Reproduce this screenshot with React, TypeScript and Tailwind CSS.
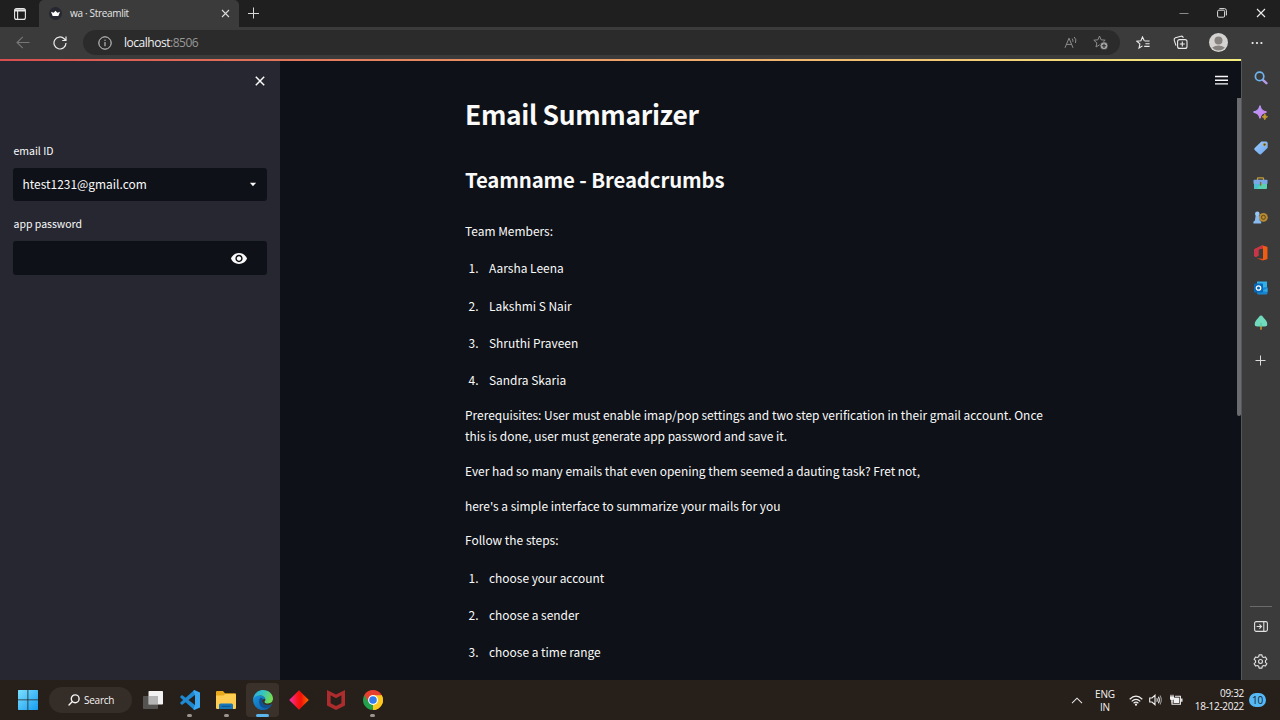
import React from "react";

const TeamMembers = ["Aarsha Leena", "Lakshmi S Nair", "Shruthi Praveen", "Sandra Skaria"];
const Steps = ["choose your account", "choose a sender", "choose a time range"];

function NumberedList({ items }: { items: string[] }) {
  return (
    <ol className="flex flex-col gap-4">
      {items.map((item, i) => (
        <li key={item} className="flex">
          <span className="w-[13.5px] text-right">{i + 1}.</span>
          <span className="ml-[10.5px]">{item}</span>
        </li>
      ))}
    </ol>
  );
}

function TabBar() {
  return (
    <div className="flex h-[27px] items-stretch bg-[#1f1f1f] text-[#e6e6e6]">
      <div className="flex w-[39px] items-center justify-center">
        <svg width="12" height="12" viewBox="0 0 12 12" fill="none" stroke="#e8e8e8" strokeWidth="1.1">
          <rect x="0.6" y="0.6" width="10.8" height="10.8" rx="2" />
          <path d="M1 2.4H11" strokeWidth="2.2" />
          <path d="M3.6 3V11.4" />
        </svg>
      </div>
      <div className="flex w-[200px] items-center rounded-t-[5px] bg-[#3b3b3b] pl-[10px]">
        <svg width="13" height="13" viewBox="0 0 13 13">
          <circle cx="6.5" cy="6.5" r="6.5" fill="#262730" />
          <path d="M2 4.8L4.6 5.8L6.5 3.8L8.4 5.8L11 4.8L9.3 9H3.7Z" fill="#fff" />
        </svg>
        <span className="ml-2 w-[151px] pb-px text-[10px] leading-[14px] tracking-[-0.32px]">wa · Streamlit</span>
        <svg width="9" height="9" viewBox="0 0 9 9" stroke="#dcdcdc" strokeWidth="1.1">
          <path d="M1 1L8 8M8 1L1 8" />
        </svg>
      </div>
      <div className="flex w-[27px] items-center justify-center pb-px">
        <svg width="12" height="12" viewBox="0 0 12 12" stroke="#d8d8d8" strokeWidth="1">
          <path d="M6.5 0.5V11.5M1 6.5H12" />
        </svg>
      </div>
      <div className="ml-auto flex items-center pb-px">
        <div className="flex w-[38px] justify-center">
          <svg width="10" height="10" viewBox="0 0 10 10" stroke="#8a8a8a"><path d="M0.5 5.5H9.5" /></svg>
        </div>
        <div className="flex w-[38px] justify-center">
          <svg width="10" height="10" viewBox="0 0 10 10" fill="none" stroke="#e0e0e0" strokeWidth="1">
            <rect x="0.6" y="2.2" width="7" height="7" rx="1.2" />
            <path d="M2.4 0.6H7.4Q9.4 0.6 9.4 2.6V7.4" />
          </svg>
        </div>
        <div className="flex w-[39px] justify-center">
          <svg width="10" height="10" viewBox="0 0 10 10" stroke="#ececec" strokeWidth="1.1"><path d="M1 1L9 9M9 1L1 9" /></svg>
        </div>
      </div>
    </div>
  );
}

const STAR = "M6.5 1L8.1 4.8L12.2 5.2L9.1 7.9L10 12L6.5 9.9L3 12L3.9 7.9L0.8 5.2L4.9 4.8Z";

function Toolbar() {
  return (
    <div className="flex h-[32px] items-center bg-[#3b3b3b] pb-px">
      <div className="flex w-[83px] items-center pl-4">
        <svg width="14" height="13" viewBox="0 0 14 13" fill="none" stroke="#777" strokeWidth="1.1">
          <path d="M13.5 6.5H1M6.8 0.8L1 6.5L6.8 12.2" />
        </svg>
        <svg className="ml-[23px]" width="14" height="14" viewBox="0 0 14 14" fill="none" stroke="#ececec" strokeWidth="1.2">
          <path d="M13 7A6 6 0 1 1 11.2 2.7L12.8 4.3M13 0.6V4.5H9.2" />
        </svg>
      </div>
      <div className="flex h-[25px] w-[1037px] items-center rounded-full bg-[#2b2b2b] pl-[15px]">
        <svg width="14" height="14" viewBox="0 0 14 14" fill="none" stroke="#d6d6d6" strokeWidth="1">
          <circle cx="7" cy="7" r="6.2" />
          <path d="M7 6V10.2M7 3.7V4.9" />
        </svg>
        <span className="ml-3 text-[12px] leading-4 tracking-[-0.48px] text-[#f0f0f0]">
          localhost<span className="text-[#979797]">:8506</span>
        </span>
        <div className="ml-auto flex items-center pr-[11px]">
          <svg width="14" height="13" viewBox="0 0 14 13" fill="none" stroke="#8d8d8d" strokeWidth="1">
            <path d="M1 11.8L5 2.2L9 11.8M2.4 8.4H7.6" />
            <path d="M8.2 2.6Q9.4 4 8.8 5.8M10.2 1Q13 3.6 11.4 7" />
          </svg>
          <svg className="ml-[15px]" width="16" height="15" viewBox="0 0 16 15" fill="none" stroke="#8d8d8d" strokeWidth="1">
            <path d={STAR} />
            <circle cx="11" cy="10.8" r="4" fill="#a5a5a5" stroke="#2b2b2b" strokeWidth="0.8" />
            <path d="M11 8.7V12.9M8.9 10.8H13.1" stroke="#2b2b2b" strokeWidth="1.1" />
          </svg>
        </div>
      </div>
      <div className="flex flex-1 items-center">
        <svg className="ml-[16px]" width="15" height="14" viewBox="0 0 15 14" fill="none" stroke="#ececec" strokeWidth="1.1">
          <path d="M8.3 4.8L6.5 1L4.9 4.8L0.8 5.2L3.9 7.9L3 12L6.5 9.9M8.6 5H13.6M9.4 7.7H13.6M8.2 10.4H13.6" />
        </svg>
        <svg className="ml-[22px]" width="15" height="15" viewBox="0 0 15 15" fill="none" stroke="#ececec" strokeWidth="1.1">
          <rect x="4.6" y="4.6" width="9.4" height="8.8" rx="2" />
          <path d="M9.3 6.5V11.5M6.8 9H11.8M3 10.6L1.2 5.2Q0.8 3.4 2.4 2.8L8 1.2Q9.8 0.9 10.3 2.8" />
        </svg>
        <svg className="ml-[21px]" width="19" height="19" viewBox="0 0 19 19">
          <circle cx="9.5" cy="9.5" r="9.5" fill="#d5d3d1" />
          <circle cx="9.5" cy="7.5" r="4" fill="#85827f" />
          <path d="M3.2 14.5Q9.5 10.5 15.8 14.5A8 8 0 0 1 3.2 14.5Z" fill="#85827f" />
        </svg>
        <svg className="ml-[23px]" width="12" height="4" viewBox="0 0 12 4" fill="#f0f0f0">
          <circle cx="1.6" cy="2" r="1.1" /><circle cx="6" cy="2" r="1.1" /><circle cx="10.4" cy="2" r="1.1" />
        </svg>
      </div>
    </div>
  );
}

function SettingsPanel() {
  return (
    <aside className="flex w-[280px] flex-col bg-[#262730] pl-[13px] pr-[13px] text-[10.5px] text-[#fafafa]">
      <div className="flex h-[40px] items-center justify-end pr-[2px]">
        <svg width="10" height="10" viewBox="0 0 10 10" stroke="#fafafa" strokeWidth="1.5"><path d="M0.8 0.8L9.2 9.2M9.2 0.8L0.8 9.2" /></svg>
      </div>
      <label className="mt-[42px] pl-[0.5px] leading-[16px]">email ID</label>
      <div className="mt-[9px] flex h-[33px] items-center rounded-[3px] bg-[#0e1117] pl-[9.5px] pr-[10.5px] text-[11.94px]">
        <span className="pb-px">htest1231@gmail.com</span>
        <svg className="ml-auto" width="8" height="5" viewBox="0 0 8 5" fill="#fafafa"><path d="M0.9 0.7H7.1L4 4.3Z" /></svg>
      </div>
      <label className="mt-[15px] pl-[0.5px] leading-[16px]">app password</label>
      <div className="mt-[9px] flex h-[34px] items-center justify-end rounded-[3px] bg-[#0e1117] pr-5">
        <svg width="16" height="11" viewBox="1 4.5 22 15" fill="#fafafa">
          <path d="M12 4.5C7 4.5 2.73 7.61 1 12c1.73 4.39 6 7.5 11 7.5s9.27-3.11 11-7.5c-1.73-4.39-6-7.5-11-7.5zM12 17c-2.76 0-5-2.24-5-5s2.24-5 5-5 5 2.24 5 5-2.24 5-5 5zm0-8c-1.66 0-3 1.34-3 3s1.34 3 3 3 3-1.34 3-3-1.34-3-3-3z" />
        </svg>
      </div>
    </aside>
  );
}

function MainContent() {
  return (
    <main className="flex min-w-0 flex-1 bg-[#0e1117] text-[#fafafa]">
      <div className="ml-[185px] w-[590px] text-[11.94px] leading-[21.33px]">
        <h1 className="mt-[35px] text-[26.4px] font-bold leading-[36px] tracking-[-0.33px]">Email Summarizer</h1>
        <h2 className="mt-[32px] text-[20.4px] font-bold leading-[30px] tracking-[-0.14px]">Teamname - Breadcrumbs</h2>
        <p className="mb-4 mt-[26px]">Team Members:</p>
        <NumberedList items={TeamMembers} />
        <p className="mt-[13.33px]">Prerequisites: User must enable imap/pop settings and two step verification in their gmail account. Once this is done, user must generate app password and save it.</p>
        <p className="mt-[13.33px]">Ever had so many emails that even opening them seemed a dauting task? Fret not,</p>
        <p className="mt-[13.33px]">here's a simple interface to summarize your mails for you</p>
        <p className="mb-4 mt-[13.33px]">Follow the steps:</p>
        <NumberedList items={Steps} />
      </div>
      <div className="ml-auto flex flex-col items-end">
        <svg className="mr-[13px] mt-[14px]" width="13" height="10" viewBox="0 0 13 10" stroke="#fafafa" strokeWidth="1.4">
          <path d="M0 1.5H13M0 5.2H13M0 8.9H13" />
        </svg>
        <div className="mt-[13px] h-[318px] w-[4.5px] rounded-b-sm bg-[#6b6c70]" />
      </div>
    </main>
  );
}

function RailItem({ children }: { children: React.ReactNode }) {
  return <div className="flex h-[35px] items-center justify-center pr-px">{children}</div>;
}

function EdgeRail() {
  return (
    <nav className="flex w-[39px] flex-col border-l border-[#55565a] bg-[#3b3b3b] pt-[1px]">
      <RailItem>
        <svg width="14" height="14" viewBox="0 0 14 14" fill="none">
          <path d="M8.8 8.8L12.4 12.2" stroke="#b69ae8" strokeWidth="2.4" strokeLinecap="round" />
          <circle cx="5.6" cy="5.4" r="4.2" stroke="#6eb5f0" strokeWidth="1.7" />
        </svg>
      </RailItem>
      <RailItem>
        <svg width="15" height="15" viewBox="0 0 15 15">
          <defs><linearGradient id="spark" x1="0" y1="0" x2="1" y2="1"><stop stopColor="#a9a0ff" /><stop offset="1" stopColor="#da7be8" /></linearGradient></defs>
          <path d="M7 0.5Q7.6 6 13.5 7Q7.6 7.8 7 13.5Q6.2 7.8 0.5 7Q6.2 6 7 0.5Z" fill="url(#spark)" stroke="url(#spark)" strokeWidth="1.3" />
          <path d="M11.8 8.8Q12.1 11.3 14.6 11.8Q12.1 12.3 11.8 14.8Q11.4 12.3 9 11.8Q11.4 11.3 11.8 8.8Z" fill="#c79a32" stroke="#c79a32" strokeWidth="0.8" />
        </svg>
      </RailItem>
      <RailItem>
        <svg width="14" height="14" viewBox="0 0 14 14">
          <defs><linearGradient id="tag" x1="0" y1="0" x2="1" y2="1"><stop stopColor="#9bcbff" /><stop offset="1" stopColor="#6fa6ee" /></linearGradient></defs>
          <path d="M7.4 0.6H12Q13.7 0.6 13.7 2.4V6.7L7 13.2Q6 13.9 5 13.1L0.7 9Q-0.1 8 0.7 7.1Z" fill="url(#tag)" />
          <circle cx="10.6" cy="3.6" r="1.4" fill="#5b4720" stroke="#d5aa48" strokeWidth="0.7" />
        </svg>
      </RailItem>
      <RailItem>
        <svg className="mt-px" width="15" height="13" viewBox="0 0 15 13">
          <path d="M4.5 3V1.6Q4.5 0.8 5.4 0.8H9.6Q10.5 0.8 10.5 1.6V3" fill="none" stroke="#c79a32" strokeWidth="1.3" />
          <rect x="1" y="5" width="13" height="7" rx="1" fill="#58d1b0" />
          <path d="M1 7H7.5L4 12H2Q1 12 1 11Z" fill="#4dbdd2" />
          <rect x="0.5" y="2.8" width="14" height="4.2" rx="0.8" fill="#78a8e8" />
          <rect x="6.9" y="4.8" width="1.4" height="4" rx="0.6" fill="#8c6a2c" />
        </svg>
      </RailItem>
      <RailItem>
        <svg width="15" height="13" viewBox="0 0 15 13">
          <circle cx="10.4" cy="6.3" r="4.4" fill="#b88a32" />
          <circle cx="10.4" cy="6.3" r="2" fill="none" stroke="#5f4518" strokeWidth="1" />
          <circle cx="4.3" cy="2.9" r="2.3" fill="#96c6f6" />
          <path d="M2.6 5H6L6.7 9.5L8.2 10.8V12.4H0.4V10.8L1.9 9.5Z" fill="#88baf0" />
        </svg>
      </RailItem>
      <RailItem>
        <svg width="14" height="16" viewBox="0 0 14 16">
          <path d="M8.5 0.3L13.3 1.9V13.9L8.6 15.6L2.5 13.3L9 13.8V3.2L4.4 4.6V10.8L1.8 12.1L0.2 11V4.2Z" fill="#e64a19" />
          <path d="M0.2 4.2L8.5 0.3L9 3.2L4.4 4.6V10.8L1.8 12.1L0.2 11Z" fill="#c8354a" />
          <path d="M9 1L13.3 1.9V13.9L9 15.2Z" fill="#ec5c12" />
        </svg>
      </RailItem>
      <RailItem>
        <svg width="14" height="14" viewBox="0 0 14 14">
          <rect x="3" y="0.5" width="10" height="8" fill="#32b0ea" />
          <path d="M3 7.5L13.5 6V12Q13.5 13.5 12 13.5H4.5Q3 13.5 3 12Z" fill="#1685d2" />
          <path d="M8 10L13.5 7V11Z" fill="#2fa9e4" />
          <rect x="0" y="2.5" width="9" height="9" rx="0.8" fill="#0868b7" />
          <circle cx="4.5" cy="7" r="2.2" fill="none" stroke="#fff" strokeWidth="1.3" />
        </svg>
      </RailItem>
      <RailItem>
        <svg width="14" height="15" viewBox="0 0 14 15">
          <path d="M7 10V14" stroke="#b8842e" strokeWidth="1.8" strokeLinecap="round" />
          <path d="M7 0.5Q8.2 0.5 9 1.9L11.2 4.6Q12.5 6.1 13.1 7.7Q14 11.5 10.5 11.6H3.5Q0 11.5 0.9 7.7Q1.5 6.1 2.8 4.6L5 1.9Q5.8 0.5 7 0.5Z" fill="#71d9bc" />
          <path d="M7 8V11.4" stroke="#4fb295" strokeWidth="0.8" />
        </svg>
      </RailItem>
      <div className="mt-[3px]">
        <RailItem>
          <svg width="11" height="11" viewBox="0 0 11 11" stroke="#dadada" strokeWidth="1"><path d="M5.5 0.5V10.5M0.5 5.5H10.5" /></svg>
        </RailItem>
      </div>
      <div className="mx-[8px] mt-auto h-px bg-[#6a6a6a]" />
      <div className="mb-[1px] mt-[2px]">
        <RailItem>
          <svg width="14" height="11" viewBox="0 0 14 11" fill="none" stroke="#e0e0e0" strokeWidth="1.1">
            <rect x="0.6" y="0.6" width="12.8" height="9.8" rx="1.6" />
            <path d="M9.8 0.6V10.4M2.6 5.5H7.4M5.4 3.4L7.5 5.5L5.4 7.6" />
          </svg>
        </RailItem>
        <RailItem>
          <svg width="15" height="15" viewBox="0 0 20 20" fill="none" stroke="#e0e0e0" strokeWidth="1.5">
            <path d="M8.1 1.2H11.9L12.4 3.7L14.2 4.7L16.6 3.9L18.5 7.2L16.6 8.9V11.1L18.5 12.8L16.6 16.1L14.2 15.3L12.4 16.3L11.9 18.8H8.1L7.6 16.3L5.8 15.3L3.4 16.1L1.5 12.8L3.4 11.1V8.9L1.5 7.2L3.4 3.9L5.8 4.7L7.6 3.7Z" strokeLinejoin="round" />
            <circle cx="10" cy="10" r="2.6" />
          </svg>
        </RailItem>
      </div>
    </nav>
  );
}

function TaskButton({ children, dot, active }: { children: React.ReactNode; dot?: boolean; active?: boolean }) {
  return (
    <div className={active ? "relative flex h-[34px] w-[33px] items-center justify-center rounded bg-[#3a312b]" : "relative flex h-[34px] w-[33px] items-center justify-center"}>
      {children}
      {dot && <span className="absolute bottom-0 left-[14px] h-[3px] w-[5px] rounded-full bg-[#9a948f]" />}
      {active && <span className="absolute bottom-0 left-[10px] h-[3px] w-[13px] rounded-full bg-[#5ab6ec]" />}
    </div>
  );
}

function Taskbar() {
  return (
    <footer className="flex h-[40px] items-center bg-[#271f1a] text-[#f5f3f2]">
      <svg className="ml-[18px]" width="20" height="20" viewBox="0 0 20 20">
        <defs><linearGradient id="win" x1="0" y1="0" x2="1" y2="1"><stop stopColor="#7be0ff" /><stop offset="1" stopColor="#169cf0" /></linearGradient></defs>
        <path d="M0.5 0H9.5V9.5H0V0.5ZM10.3 0H19.5L20 0.5V9.5H10.3ZM0 10.3H9.5V20H0.5L0 19.5ZM10.3 10.3H20V19.5L19.5 20H10.3Z" fill="url(#win)" />
      </svg>
      <div className="ml-[11px] flex h-[26px] w-[83px] items-center rounded-full bg-[#352d28] pl-[19px]">
        <svg width="12" height="12" viewBox="0 0 12 12" fill="none" stroke="#f5f5f5" strokeWidth="1.4"><circle cx="7.2" cy="4.8" r="3.9" /><path d="M4.4 7.6L1 11" strokeLinecap="round" /></svg>
        <span className="ml-[4px] text-[10px] tracking-[-0.25px]">Search</span>
      </div>
      <div className="ml-[4.5px] flex gap-[3.6px]">
        <TaskButton>
          <svg width="20" height="20" viewBox="0 0 20 20">
            <rect x="5.5" y="1" width="14.5" height="13.5" rx="0.8" fill="#f2f2f2" />
            <rect x="0" y="6" width="15" height="13" rx="0.8" fill="#666" fillOpacity="0.75" />
            <rect x="5.5" y="6" width="9.5" height="8.5" fill="#b5b5b5" />
          </svg>
        </TaskButton>
        <TaskButton dot>
          <svg width="20" height="20" viewBox="0 0 20 20">
            <path d="M0.3 6.6L2 5.1L15 14.9V20H14.3L0.3 7.6Z" fill="#1e88d0" />
            <path d="M0.3 13.4L2 14.9L15 5.1V0H14.3L0.3 12.4Z" fill="#2089d2" />
            <path d="M14.3 0L20 2.5V17.5L14.3 20L13.3 19L15 15V5L13.3 1Z" fill="#3ba7ef" />
          </svg>
        </TaskButton>
        <TaskButton dot>
          <svg width="20" height="18" viewBox="0 0 20 18">
            <path d="M0 1Q0 0 1 0H7L9 2.3H19Q20 2.3 20 3.3V10H0Z" fill="#e8a91d" />
            <path d="M0 4.5H7.5L9.3 3H19Q20 3 20 4V17Q20 18 19 18H1Q0 18 0 17Z" fill="#fdcc50" />
            <path d="M3 18V14Q3 12.5 4.5 12.5H15.5Q17 12.5 17 14V18Z" fill="#1576b8" />
            <path d="M5.5 15.3H14.5" stroke="#0c4f88" strokeWidth="1" />
          </svg>
        </TaskButton>
        <TaskButton active>
          <svg width="20" height="20" viewBox="0 0 20 20">
            <defs>
              <linearGradient id="edgeTop" x1="0" y1="0" x2="1" y2="0.3"><stop stopColor="#2aa8e0" /><stop offset="0.5" stopColor="#34c4c5" /><stop offset="1" stopColor="#71dc55" /></linearGradient>
              <linearGradient id="edgeLow" x1="0" y1="0" x2="1" y2="1"><stop stopColor="#1994dc" /><stop offset="1" stopColor="#0c5aa8" /></linearGradient>
            </defs>
            <path d="M0 10C0 6 4 5.4 7 5.6C10.2 5.8 12.4 7.5 12.4 9.5C10.6 8.5 8.8 9.6 9 11.2C9.4 14 12 15.6 15 15.4C17 15.3 18.4 14.5 18.9 14.6A10 10 0 0 1 0 10Z" fill="url(#edgeLow)" />
            <path d="M7 8.2C5 11.5 6.4 17 11.4 18.2C14.8 18.4 17.6 16.8 18.9 14.6C18.4 14.5 17 15.3 15 15.4C12 15.6 9.4 14 9 11.2C8.9 9.7 9.6 8.9 10 8.6C9.2 7.6 7.8 7.5 7 8.2Z" fill="#10508f" />
            <path d="M0 9.6C0.6 3.8 4.8 0 10 0C16 0 20 4.3 20 8.6C20 11.8 17.6 13.5 15 13.5C12.8 13.5 11.5 12.8 11.5 12C11.5 11.4 12.4 11 12.4 9.5C12.4 7.2 10.2 5.4 7 5.4C3.8 5.4 1 6.8 0 9.6Z" fill="url(#edgeTop)" />
          </svg>
        </TaskButton>
        <TaskButton>
          <svg width="20" height="20" viewBox="0 0 20 20">
            <defs><linearGradient id="dia"><stop stopColor="#f032b4" /><stop offset="0.45" stopColor="#fa1414" /><stop offset="0.6" stopColor="#f01208" /><stop offset="1" stopColor="#ff6a00" /></linearGradient></defs>
            <path d="M10 0.3L19.8 10L10 19.7L0.2 10Z" fill="url(#dia)" />
          </svg>
        </TaskButton>
        <TaskButton>
          <svg width="18" height="20" viewBox="0 0 18 20">
            <path d="M0 0L9 4.5L18 0V15.5L9 20L0 15.5ZM3.6 5.3V13.2L9 16L14.4 13.2V5.3L9 8.2Z" fill="#ae2c2e" />
          </svg>
        </TaskButton>
        <TaskButton dot>
          <svg width="20" height="20" viewBox="0 0 20 20">
            <path d="M10 10L1.34 5A10 10 0 0 1 18.66 5Z" fill="#e8402f" />
            <path d="M10 10L18.66 5A10 10 0 0 1 10 20Z" fill="#fcc81e" />
            <path d="M10 10V20A10 10 0 0 1 1.34 5Z" fill="#23a04b" />
            <path d="M10 5.2H18.7A10 10 0 0 1 10 20L14 12.5Z" fill="#fcc81e" />
            <path d="M1.34 5L5.8 12.4L10 5.2Z" fill="#e8402f" />
            <circle cx="10" cy="10" r="4.9" fill="#fff" />
            <circle cx="10" cy="10" r="3.8" fill="#317bea" />
          </svg>
        </TaskButton>
      </div>
      <div className="ml-auto flex items-center pr-[14px] text-[10px] leading-[13px]">
        <svg width="12" height="7" viewBox="0 0 12 7" fill="none" stroke="#e8e8e8" strokeWidth="1.1"><path d="M1 6.2L6 1.2L11 6.2" /></svg>
        <div className="ml-[11px] w-[22px] pt-px text-center tracking-[-0.2px]">ENG<br />IN</div>
        <svg className="ml-[13px]" width="14" height="11" viewBox="0 0 14 11" fill="none" stroke="#f0f0f0" strokeWidth="1.2">
          <path d="M0.7 4.2Q7 -1.8 13.3 4.2M2.7 6.4Q7 2.4 11.3 6.4M4.6 8.3Q7 6 9.4 8.3" />
          <circle cx="7" cy="9.7" r="1.1" fill="#f0f0f0" stroke="none" />
        </svg>
        <svg className="ml-[6px]" width="13" height="12" viewBox="0 0 13 12" fill="none" stroke="#f0f0f0" strokeWidth="1.1">
          <path d="M0.7 4H3L6 1.3V10.7L3 8H0.7Z" />
          <path d="M7.8 4.2Q8.8 6 7.8 7.8M9.4 2.8Q11.3 6 9.4 9.2" /><path d="M11 1.5Q13.6 6 11 10.5" stroke="#999" />
        </svg>
        <svg className="ml-[7px]" width="14" height="12" viewBox="0 0 14 12" fill="none" stroke="#f0f0f0" strokeWidth="1.1">
          <path d="M6 2.2H11.4V10.2H3V7" /><rect x="4.6" y="3.6" width="5.6" height="5.4" fill="#f0f0f0" stroke="none" />
          <path d="M12.8 4.6V7.8" strokeWidth="1.4" /><path d="M1 2.5H5V4.8Q5 6.5 3 6.5Q1 6.5 1 4.8Z" fill="#f0f0f0" stroke="none" /><path d="M2 0.7V3M4 0.7V3M3 6V8.5" />
        </svg>
        <div className="ml-[10px] w-[51px] whitespace-nowrap text-right tracking-[-0.3px]">09:32<br />18-12-2022</div>
        <div className="ml-[5px] flex h-[14px] w-[17px] items-center justify-center rounded-full bg-[#54b9f5] text-[10px] tracking-[-0.3px] text-[#14202a]">10</div>
      </div>
    </footer>
  );
}

export default function App() {
  return (
    <div className="flex h-[720px] w-[1280px] flex-col overflow-hidden bg-[#0e1117] font-['Open_Sans',sans-serif]">
      <TabBar />
      <Toolbar />
      <div className="flex h-[621px]">
        <div className="flex w-[1241px] flex-col font-['Noto_Sans_CJK_SC',sans-serif]">
          <div className="h-[2px] bg-linear-to-r from-[#d84e50] to-[#f4ee80]" />
          <div className="flex flex-1">
            <SettingsPanel />
            <MainContent />
          </div>
        </div>
        <EdgeRail />
      </div>
      <Taskbar />
    </div>
  );
}
